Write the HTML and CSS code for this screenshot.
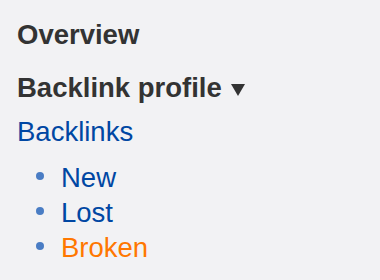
FILE: index.html
```html
<!DOCTYPE html>
<html lang="en">
<head>
  <meta charset="UTF-8">
  <title>Site Explorer</title>
  <meta name="viewport" content="width=device-width, initial-scale=1.0">
  <link rel="stylesheet" href="styles.css">
</head>
<body>

  <nav class="side-nav">
    <div class="nav-title">Overview</div>
    <div class="nav-title nav-group">
      Backlink profile<svg class="caret" width="14" height="12" viewBox="0 0 14 12"><path d="M0 0H14L7 12Z" fill="#333"/></svg>
    </div>
    <a class="nav-link" href="#">Backlinks</a>
    <ul class="sub-list">
      <li><a class="nav-link" href="#">New</a></li>
      <li><a class="nav-link" href="#">Lost</a></li>
      <li><a class="nav-link broken" href="#">Broken</a></li>
    </ul>
  </nav>

</body>
</html>
```

FILE: styles.css
```css
:root {
  --text: #333;
  --link: #0047a3;
  --bullet: #4a7dc4;
  --warn: #ff7700;
  --bg: #f2f2f4;
}

body {
  margin: 0;
  padding: 0;
  background-color: var(--bg);
  font-family: "Liberation Sans", Arial, sans-serif;
  font-size: 27.5px;
  line-height: 35px;
}

.side-nav {
  padding: 17px 0 0 17px;
}

.nav-title {
  font-weight: bold;
  color: var(--text);
  margin-bottom: 18px;
}

.nav-group {
  margin-bottom: 9px;
}

.caret {
  margin-left: 9px;
  vertical-align: 1px;
}

.nav-link {
  display: block;
  color: var(--link);
  text-decoration: none;
  margin-bottom: 11px;
}

.sub-list {
  list-style: none;
  margin: 0;
  padding: 0 0 0 19px;
}

.sub-list li {
  display: flex;
  align-items: flex-start;
}

.sub-list li::before {
  content: "";
  width: 8px;
  height: 8px;
  margin: 12px 17px 0 0;
  border-radius: 50%;
  background-color: var(--bullet);
  flex-shrink: 0;
}

.sub-list .nav-link {
  margin-bottom: 0;
}

.nav-link.broken {
  color: var(--warn);
}
```
